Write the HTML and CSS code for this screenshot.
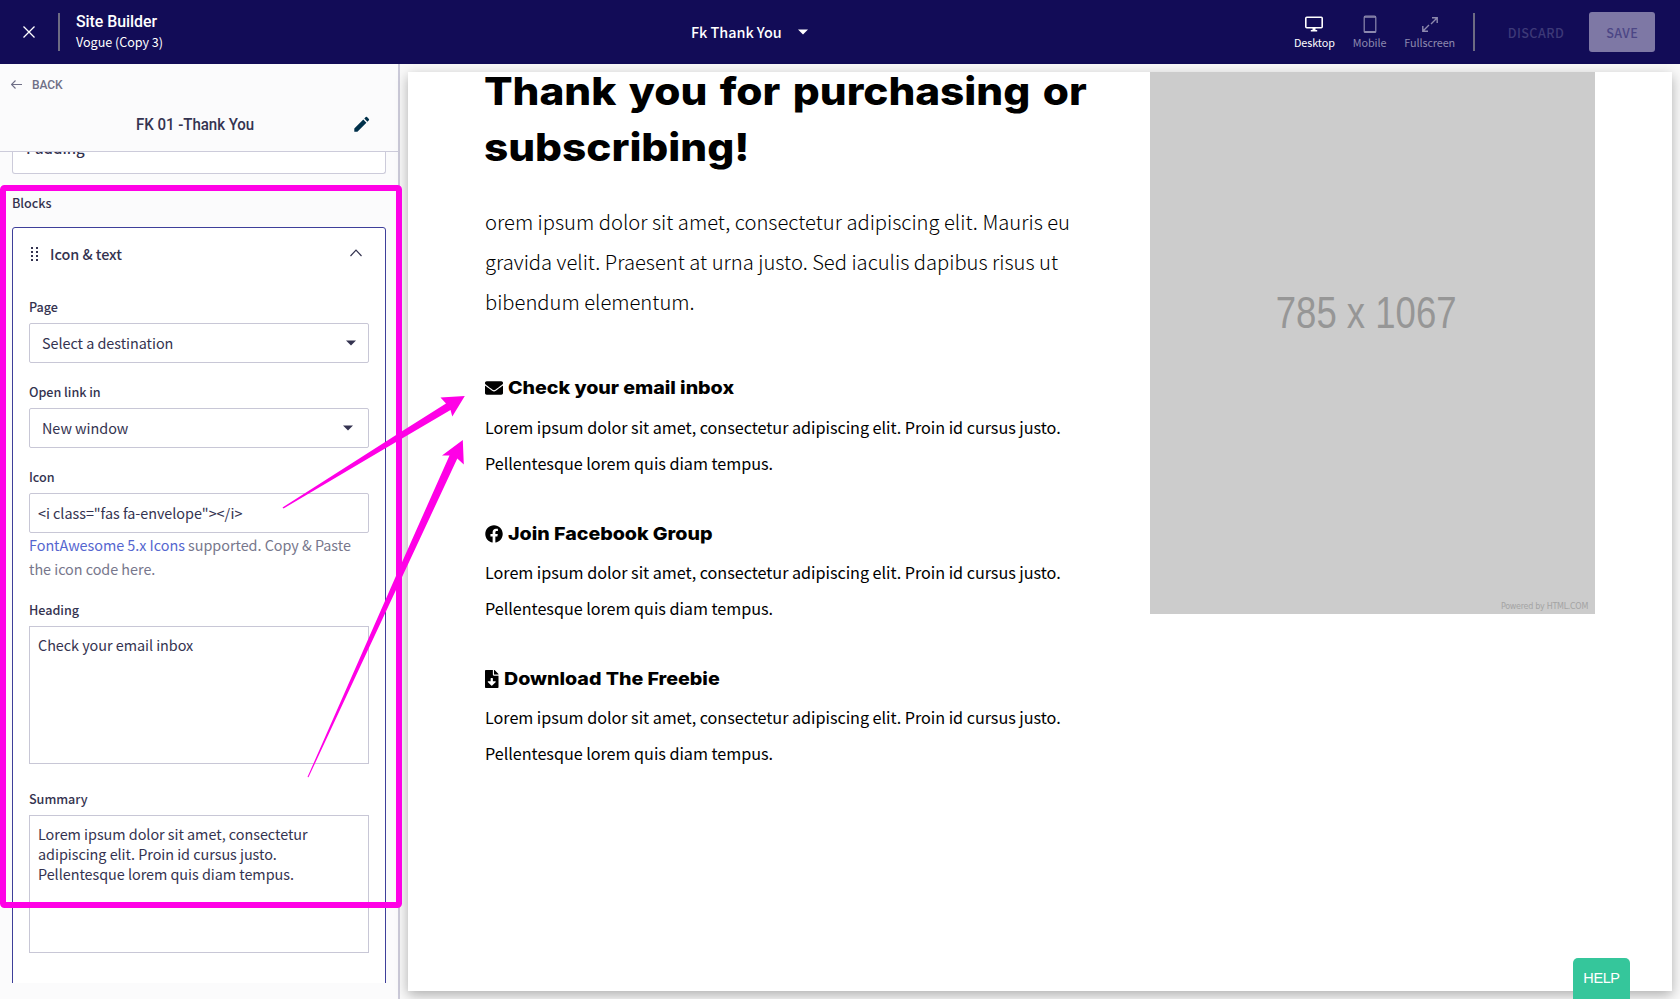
FILE: index.html
```html
<!DOCTYPE html>
<html lang="en">
<head>
<meta charset="utf-8">
<title>Site Builder</title>
<link rel="stylesheet" href="styles.css">
</head>
<body>
<header class="topbar">
  <div class="brand">
    <svg class="close" width="12" height="12" viewBox="0 0 12 12"><path d="M.5.5l11 11M11.5.5l-11 11" stroke="#fff" stroke-width="1.3" fill="none"/></svg>
    <span class="rule"></span>
    <div class="brand-text">
      <div class="brand-title"><span>Site Builder</span></div>
      <div class="brand-sub"><span>Vogue (Copy 3)</span></div>
    </div>
  </div>
  <div class="page-picker"><span>Fk Thank You</span><svg width="10" height="6" viewBox="0 0 10 6"><path d="M0 .5h10L5 5.5z" fill="#fff"/></svg></div>
  <div class="modes">
    <div class="mode mode-on"><svg width="18" height="18" viewBox="0 0 18 18"><rect x=".8" y="2.300" width="16.400" height="10.400" rx="1" fill="none" stroke="currentColor" stroke-width="1.600"/><path d="M7.500 13h3v2h1.700v1.500H5.800V15h1.700z" fill="currentColor"/></svg><span>Desktop</span></div>
    <div class="mode"><svg width="18" height="18" viewBox="0 0 18 18"><rect x="3.200" y="1.200" width="11.600" height="16.300" rx="1.300" fill="none" stroke="currentColor" stroke-width="1.200"/><path d="M3.200 2.100h11.600M3.200 16.700h11.600" stroke="currentColor" stroke-width="1.200"/></svg><span>Mobile</span></div>
    <div class="mode"><svg width="18" height="18" viewBox="0 0 18 18"><path d="M11 2.800h5.200V8M16 3l-6 6M7 16.200H1.800V11M2 16l6-6" fill="none" stroke="currentColor" stroke-width="1.400"/></svg><span>Fullscreen</span></div>
  </div>
  <span class="rule rule-right"></span>
  <button class="discard">DISCARD</button>
  <button class="save">SAVE</button>
</header>

<div class="workspace">
  <aside class="sidebar">
    <div class="side-head">
      <div class="back"><svg width="11" height="9" viewBox="0 0 11 9"><path d="M4.500.5l-4 4 4 4M.5 4.500H11" fill="none" stroke="#6f6f86" stroke-width="1.100"/></svg><span>BACK</span></div>
      <div class="side-title"><span>FK 01 -Thank You</span><svg class="pencil" width="16" height="16" viewBox="0 0 16 16"><path d="M.3 12.600V15.700H3.400L12.400 6.700 9.300 3.600zM14.900 4.200a.9.9 0 0 0 0-1.200L13 1.100a.9.9 0 0 0-1.200 0L10.300 2.600l3.100 3.100z" fill="#00304a"/></svg></div>
    </div>
    <div class="side-scroll">
      <div class="panel-closed"><span>Padding</span></div>
      <div class="section-label">Blocks</div>
      <div class="block">
        <div class="block-head">
          <svg class="grip" width="7" height="15" viewBox="0 0 7 15"><path d="M0 0h2v2H0zM5 0h2v2H5zM0 4h2v2H0zM5 4h2v2H5zM0 8h2v2H0zM5 8h2v2H5zM0 12h2v2H0zM5 12h2v2H5z" fill="#343350"/></svg>
          <span class="block-name">Icon &amp; text</span>
          <svg width="12" height="8" viewBox="0 0 12 8"><path d="M.5 7L6 1.200 11.500 7" fill="none" stroke="#343350" stroke-width="1.200"/></svg>
        </div>
        <div class="field">
          <label class="label">Page</label>
          <div class="select"><span>Select a destination</span><svg width="10" height="6" viewBox="0 0 10 6"><path d="M0 .5h10L5 5.500z" fill="#343350"/></svg></div>
        </div>
        <div class="field">
          <label class="label">Open link in</label>
          <div class="select select-near"><span>New window</span><svg width="10" height="6" viewBox="0 0 10 6"><path d="M0 .5h10L5 5.500z" fill="#343350"/></svg></div>
        </div>
        <div class="field">
          <label class="label">Icon</label>
          <div class="input"><span>&lt;i class="fas fa-envelope"&gt;&lt;/i&gt;</span></div>
          <div class="hint"><a class="link">FontAwesome 5.x Icons</a> supported. Copy &amp; Paste<br>the icon code here.</div>
        </div>
        <div class="field field-area">
          <label class="label">Heading</label>
          <div class="area">Check your email inbox</div>
        </div>
        <div class="field">
          <label class="label">Summary</label>
          <div class="area">Lorem ipsum dolor sit amet, consectetur<br>adipiscing elit. Proin id cursus justo.<br>Pellentesque lorem quis diam tempus.</div>
        </div>
      </div>
    </div>
  </aside>

  <main class="stage">
    <div class="canvas">
      <section class="copy">
        <h1 class="title">Thank you for purchasing or<br>subscribing!</h1>
        <p class="lead">orem ipsum dolor sit amet, consectetur adipiscing elit. Mauris eu<br>gravida velit. Praesent at urna justo. Sed iaculis dapibus risus ut<br>bibendum elementum.</p>
        <article class="item">
          <h2 class="item-title"><svg width="18" height="18" viewBox="0 0 512 512"><path d="M502.300 190.800c3.900-3.100 9.700-.2 9.700 4.700V400c0 26.500-21.500 48-48 48H48c-26.500 0-48-21.500-48-48V195.600c0-5 5.700-7.800 9.700-4.700 22.400 17.400 52.100 39.500 154.100 113.600 21.100 15.400 56.700 47.800 92.200 47.600 35.700.3 72-32.800 92.300-47.600 102-74.100 131.600-96.300 154-113.700zM256 320c23.200.4 56.600-29.200 73.400-41.400 132.700-96.300 142.800-104.700 173.400-128.700 5.800-4.500 9.200-11.500 9.200-18.900v-19c0-26.500-21.500-48-48-48H48c-26.500 0-48 21.500-48 48v19c0 7.400 3.400 14.300 9.200 18.900 30.600 23.900 40.700 32.400 173.400 128.700 16.800 12.200 50.200 41.800 73.400 41.400z"/></svg><span>Check your email inbox</span></h2>
          <p class="item-text">Lorem ipsum dolor sit amet, consectetur adipiscing elit. Proin id cursus justo.<br>Pellentesque lorem quis diam tempus.</p>
        </article>
        <article class="item">
          <h2 class="item-title"><svg width="18" height="18" viewBox="0 0 512 512"><path d="M504 256C504 119 393 8 256 8S8 119 8 256c0 123.780 90.690 226.380 209.250 245V327.690h-63V256h63v-54.640c0-62.150 37-96.480 93.670-96.480 27.140 0 55.520 4.840 55.520 4.840v61h-31.280c-30.800 0-40.410 19.120-40.410 38.730V256h68.780l-11 71.690h-57.780V501C413.310 482.380 504 379.780 504 256z"/></svg><span>Join Facebook Group</span></h2>
          <p class="item-text">Lorem ipsum dolor sit amet, consectetur adipiscing elit. Proin id cursus justo.<br>Pellentesque lorem quis diam tempus.</p>
        </article>
        <article class="item">
          <h2 class="item-title"><svg width="13.500" height="18" viewBox="0 0 384 512"><path d="M224 136V0H24C10.700 0 0 10.700 0 24v464c0 13.300 10.700 24 24 24h336c13.300 0 24-10.700 24-24V160H248c-13.200 0-24-10.800-24-24zm76.450 211.360l-96.420 95.700c-6.650 6.610-17.390 6.610-24.040 0l-96.420-95.700C73.420 337.290 80.540 320 94.820 320H160v-80c0-8.840 7.160-16 16-16h32c8.840 0 16 7.160 16 16v80h65.180c14.280 0 21.400 17.290 11.270 27.360zM377 105L279.100 7c-4.500-4.500-10.600-7-17-7H256v128h128v-6.100c0-6.300-2.500-12.400-7-16.900z"/></svg><span>Download The Freebie</span></h2>
          <p class="item-text">Lorem ipsum dolor sit amet, consectetur adipiscing elit. Proin id cursus justo.<br>Pellentesque lorem quis diam tempus.</p>
        </article>
      </section>
      <figure class="placeholder">
        <span class="dims">785 x 1067</span>
        <span class="credit">Powered by HTML.COM</span>
      </figure>
    </div>
  </main>
</div>

<svg class="markup" width="480" height="999" viewBox="0 0 480 999">
  <rect x="3" y="188" width="396" height="717" rx="1.500"/>
  <path d="M282.500 507.500L400 432.500 446 403.500 440.500 397.500 464.800 396 452.300 416.500 450.500 410 402 438.500 283.500 508.500z"/>
  <path d="M307.500 777L403 560 449.500 455.500 442 455.500 462.800 440 463.800 464.500 457.300 458.500 410 560 308.500 777.300z"/>
</svg>
<button class="help">HELP</button>
</body>
</html>
```
FILE: styles.css
```css
* { box-sizing: border-box; }
body {
  margin: 0;
  width: 1680px;
  height: 999px;
  overflow: hidden;
  position: relative;
  background: #f9f9f9;
  color: #343350;
  font-family: "Noto Sans CJK JP", "Noto Sans CJK SC", sans-serif;
  font-size: 14.4px;
  letter-spacing: -.035px;
}
h1, h2, p, figure { margin: 0; }
button { border: 0; padding: 0; background: none; font: inherit; }
svg { display: block; flex: none; }
span { white-space: nowrap; }

.topbar { height: 64px; background: #120c57; color: #fff; display: flex; align-items: center; }
.brand { width: 691px; padding-left: 23px; display: flex; align-items: center; }
.rule { width: 2px; height: 38px; background: #6d6b83; margin-left: 23px; }
.brand-text { margin: -2px 0 0 16px; }
.brand-title { font: 500 17px/22px Roboto, sans-serif; }
.brand-title span { display: inline-block; transform: scaleX(.935); transform-origin: left; }
.brand-sub { font-size: 12.6px; line-height: 20px; }
.page-picker { display: flex; align-items: center; gap: 16px; font-weight: 500; line-height: 24px; width: 603px; }
.modes { display: flex; gap: 18px; }
.mode { display: flex; flex-direction: column; align-items: center; font-size: 10.8px; line-height: 16px; gap: 1px; color: #8d89ae; letter-spacing: -.08px; }
.mode-on { color: #fff; }
.rule-right { margin-left: 17.5px; }
.discard { margin-left: 33px; font-size: 12.6px; font-weight: 500; color: #3d3977; letter-spacing: .45px; }
.save { margin-left: 25px; width: 66px; height: 40px; border-radius: 3px; background: #7e78a5; color: #4c4685; font-size: 12.6px; font-weight: 500; letter-spacing: .45px; }

.workspace { display: flex; height: 935px; }
.sidebar { width: 400px; border-right: 2px solid #cccbda; background: #fbfbfc; }
.side-head { height: 88px; border-bottom: 1px solid #cccbda; }
.back { display: flex; align-items: center; gap: 10px; padding: 10px 0 0 11px; height: 31px; font: 500 12px/20px Roboto, sans-serif; color: #6f6f86; letter-spacing: -.1px; }
.side-title { display: flex; align-items: center; padding: 13px 28px 0 136px; font: 500 17px/32px Roboto, sans-serif; justify-content: space-between; }
.side-title span { transform: scaleX(.885); transform-origin: left; }
.side-scroll { height: 831px; overflow: hidden; padding: 0 12px; }
.panel-closed { display: flex; height: 22px; border: 1px solid #cccbda; border-top: 0; border-radius: 0 0 3px 3px; background: #fff; padding-left: 13px; font-weight: 500; font-size: 15px; line-height: 20px; }
.panel-closed span { margin-top: -14px; }
.section-label { font-size: 12.6px; font-weight: 500; line-height: 22px; margin: 18px 0 13px; }
.block { border: 1px solid #3e3f9a; border-radius: 3px; background: #fff; height: 800px; padding: 0 16px; width: 374px; }
.block-head { height: 68px; display: flex; padding: 18px 7px 0 2px; }
.block-head svg { margin-top: 3px; }
.block-head .grip { margin-top: 1px; }
.block-name { flex: 1; margin-left: 12px; font-weight: 500; line-height: 15px; }
.field { margin-bottom: 18px; }
.field-area { margin-bottom: 24px; }
.label { display: block; font-size: 12.6px; font-weight: 500; line-height: 22px; margin-bottom: 5px; }
.select, .input { height: 40px; width: 340px; border: 1px solid #c8c7d6; border-radius: 2px; line-height: 38px; padding-left: 8px; }
.select { padding: 0 12px; display: flex; justify-content: space-between; align-items: center; }
.select-near { padding-right: 15px; }
.hint { line-height: 24px; color: #77778c; }
.link { color: #5566cf; }
.area { height: 138px; width: 340px; border: 1px solid #c8c7d6; padding: 8px; line-height: 20px; }

.stage { flex: 1; padding: 8px; background: #f9f9f9; }
.canvas { height: 919px; background: #fff; box-shadow: 0 4px 12px rgba(0, 0, 0, .3); padding-left: 77px; display: flex; overflow: hidden; color: #000; }
.copy { width: 665px; white-space: nowrap; }
.title { font: 800 38.5px/56px Inter, sans-serif; margin: -9px 0 0 -1px; transform: scaleX(1.1); transform-origin: left; word-spacing: 3px; }
.lead { font-size: 20.2px; font-weight: 300; line-height: 40px; margin-top: 27px; letter-spacing: 0; }
.item { height: 108px; margin-top: 37px; }
.lead + .item { margin-top: 51px; }
.item-title { display: flex; align-items: center; gap: 5px; font: 800 18px/30px Inter, sans-serif; padding-top: 1px; margin-bottom: 5px; }
.lead + .item .item-title { padding-top: 0; margin-bottom: 6px; }
.item-title span { transform: scaleX(1.093); transform-origin: left; }
.item-text { font-size: 16.2px; line-height: 36px; }
.placeholder { width: 445px; height: 542px; background: #ccc; color: #969696; display: flex; flex-direction: column; align-items: center; justify-content: space-between; padding: 216px 7px 0; }
.dims { font: 44px/50px "Liberation Sans", sans-serif; letter-spacing: 0; transform: scaleX(.83); padding-right: 15px; }
.credit { align-self: flex-end; font: 8px/14px "DejaVu Sans", sans-serif; color: #a4a4a4; letter-spacing: -.29px; }

.markup { position: absolute; left: 0; top: 0; fill: #ff00e6; }
.markup rect { fill: none; stroke: #ff00e6; stroke-width: 6; }
.help { position: absolute; left: 1573px; top: 958px; width: 57px; height: 41px; padding-bottom: 2px; border-radius: 5px 5px 0 0; background: #35c69b; color: #fff; font: 14.5px/30px "Liberation Sans", sans-serif; letter-spacing: -.4px; }
```
